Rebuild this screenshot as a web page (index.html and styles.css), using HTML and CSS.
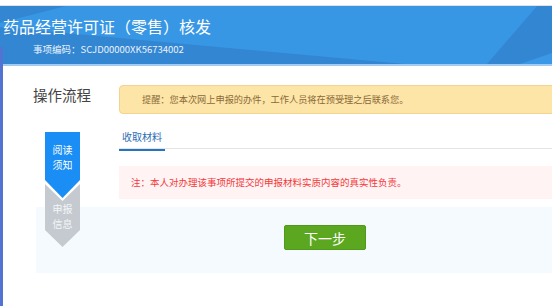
FILE: index.html
```html
<!DOCTYPE html>
<html lang="zh-CN">
<head>
<meta charset="utf-8">
<title>药品经营许可证（零售）核发</title>
<link rel="stylesheet" href="styles.css">
</head>
<body>
<div class="page">
  <div class="topbar"></div>
  <header class="banner">
    <svg class="banner-bg" viewBox="0 0 552 58" preserveAspectRatio="none" aria-hidden="true">
      <polygon points="0,0 66,0 0,17" fill="#3386d2"/>
      <polygon points="0,21 405,58 0,58" fill="#3386d2"/>
      <polygon points="487,58 537,0 552,0 552,50 520,58" fill="#3386d2"/>
      <polygon points="520,58 552,47 552,58" fill="#3a98e6"/>
    </svg>
    <h1 class="title">药品经营许可证（零售）核发</h1>
    <div class="code">事项编码：SCJD00000XK56734002</div>
  </header>
  <main class="main">
    <div class="row">
      <aside class="side">
        <h2 class="side-title">操作流程</h2>
      </aside>
      <section class="content">
        <div class="alert">提醒：您本次网上申报的办件，工作人员将在预受理之后联系您。</div>
        <div class="tabs"><span class="tab">收取材料</span></div>
        <div class="note">注：本人对办理该事项所提交的申报材料实质内容的真实性负责。</div>
      </section>
    </div>
    <div class="footer">
      <button class="btn-next" type="button">下一步</button>
    </div>
    <div class="steps">
      <div class="step step-active">阅读<br>须知</div>
      <div class="step step-next">申报<br>信息</div>
    </div>
  </main>
  <div class="frame-edge"></div>
</div>
</body>
</html>
```

FILE: styles.css
```css
html, body {
  margin: 0;
  padding: 0;
  overflow: hidden;
  background: #ffffff;
}
body {
  font-family: "Noto Sans CJK SC", "Noto Sans", sans-serif;
  width: 552px;
  height: 306px;
}
.page {
  position: relative;
  width: 552px;
  height: 306px;
  overflow: hidden;
}
.topbar {
  height: 5px;
  background: #ffffff;
  border-bottom: 1px solid #e2e2e2;
}
.banner {
  position: relative;
  height: 58px;
  background: #3897e4;
  border-bottom: 2px solid #a3cbef;
  overflow: hidden;
}
.banner-bg {
  position: absolute;
  left: 0;
  top: 0;
  width: 552px;
  height: 58px;
}
.title {
  position: relative;
  margin: 0;
  padding: 10px 0 0 3px;
  font-size: 16px;
  line-height: 20px;
  font-weight: normal;
  color: #ffffff;
  white-space: nowrap;
}
.code {
  position: relative;
  padding: 7px 0 0 33px;
  font-size: 9.5px;
  line-height: 12px;
  color: #eaf3fc;
  white-space: nowrap;
}
.main {
  position: relative;
  width: 640px;
}
.row {
  display: flex;
}
.side {
  width: 119px;
  flex: none;
  padding: 19px 0 0 33px;
  box-sizing: border-box;
}
.side-title {
  margin: 0;
  font-size: 14.5px;
  line-height: 20px;
  font-weight: normal;
  color: #444444;
  white-space: nowrap;
}
.content {
  flex: 1;
  padding-top: 19px;
}
.alert {
  height: 27px;
  line-height: 27px;
  border: 1px solid #f4d38e;
  border-radius: 4px;
  background: #fde4a7;
  padding-left: 22px;
  font-size: 9.2px;
  color: #8a6a39;
  white-space: nowrap;
}
.tabs {
  margin-top: 8px;
  border-bottom: 1px solid #e4e4e4;
  height: 26px;
}
.tab {
  display: inline-block;
  padding: 0 3px;
  line-height: 24px;
  height: 24px;
  font-size: 10px;
  color: #2a6db5;
  border-bottom: 2px solid #2473c4;
}
.note {
  margin-top: 17px;
  height: 33px;
  line-height: 33px;
  background: #fff3f4;
  padding-left: 12px;
  font-size: 9.5px;
  color: #f23a3a;
  white-space: nowrap;
}
.footer {
  margin: 8px 0 0 36px;
  width: 578px;
  height: 66px;
  background: #f5faff;
  display: flex;
  align-items: center;
  justify-content: center;
}
.btn-next {
  width: 82px;
  height: 25px;
  margin-top: -5px;
  border: 1px solid #50991b;
  border-radius: 2px;
  background: #5ba720;
  color: #ffffff;
  font-family: "Noto Sans CJK SC", "Noto Sans", sans-serif;
  font-size: 14px;
  line-height: 22px;
  padding: 0;
  cursor: pointer;
}
.steps {
  position: absolute;
  left: 45px;
  top: 66px;
  width: 35px;
  display: flex;
  flex-direction: column;
}
.step {
  width: 35px;
  box-sizing: border-box;
  text-align: center;
  font-size: 10px;
  line-height: 14.5px;
  color: #ffffff;
}
.step-active {
  height: 66px;
  padding-top: 11.25px;
  background: #1a8ef5;
  clip-path: polygon(0 0, 100% 0, 100% 48px, 50% 100%, 0 48px);
  position: relative;
  z-index: 1;
}
.step-next {
  height: 67px;
  margin-top: -18px;
  padding-top: 22.25px;
  background: #c5cad0;
  color: #f4f6f8;
  clip-path: polygon(0 4px, 50% 21px, 100% 4px, 100% 50px, 50% 100%, 0 50px);
}
.frame-edge {
  position: absolute;
  left: 0;
  top: 47px;
  bottom: 0;
  width: 3px;
  background: #5373d2;
}
```
